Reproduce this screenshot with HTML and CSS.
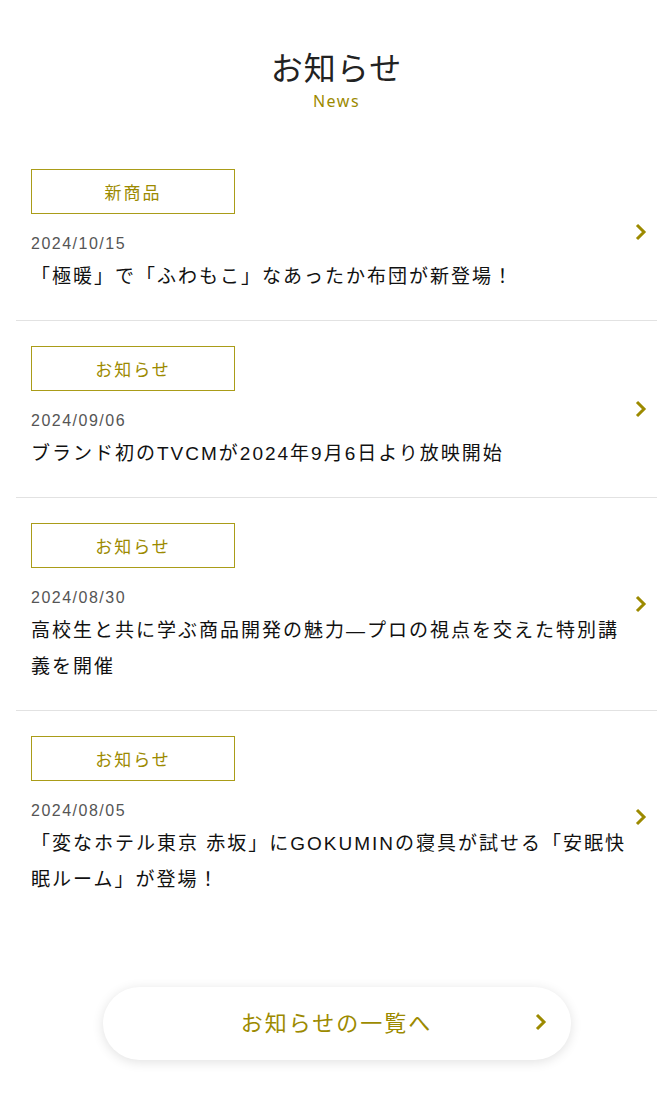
FILE: index.html
```html
<!DOCTYPE html>
<html lang="ja">
<head>
<meta charset="utf-8">
<link rel="stylesheet" href="styles.css">
</head>
<body>
<section class="news">
  <header class="news-head">
    <h2 class="news-title">お知らせ</h2>
    <p class="news-sub">News</p>
  </header>
  <ul class="news-list">
    <li class="news-item">
      <a class="news-link" href="#">
        <div class="news-body">
          <span class="tag">新商品</span>
          <time class="date">2024/10/15</time>
          <p class="headline">「極暖」で「ふわもこ」なあったか布団が新登場！</p>
        </div>
        <svg class="chev" viewBox="0 0 12 18" width="12" height="18"><path d="M2 2 L9 9 L2 16" fill="none" stroke="currentColor" stroke-width="3"/></svg>
      </a>
    </li>
    <li class="news-item">
      <a class="news-link" href="#">
        <div class="news-body">
          <span class="tag">お知らせ</span>
          <time class="date">2024/09/06</time>
          <p class="headline">ブランド初のTVCMが2024年9月6日より放映開始</p>
        </div>
        <svg class="chev" viewBox="0 0 12 18" width="12" height="18"><path d="M2 2 L9 9 L2 16" fill="none" stroke="currentColor" stroke-width="3"/></svg>
      </a>
    </li>
    <li class="news-item">
      <a class="news-link" href="#">
        <div class="news-body">
          <span class="tag">お知らせ</span>
          <time class="date">2024/08/30</time>
          <p class="headline">高校生と共に学ぶ商品開発の魅力―プロの視点を交えた特別講義を開催</p>
        </div>
        <svg class="chev" viewBox="0 0 12 18" width="12" height="18"><path d="M2 2 L9 9 L2 16" fill="none" stroke="currentColor" stroke-width="3"/></svg>
      </a>
    </li>
    <li class="news-item">
      <a class="news-link" href="#">
        <div class="news-body">
          <span class="tag">お知らせ</span>
          <time class="date">2024/08/05</time>
          <p class="headline">「変なホテル東京 赤坂」にGOKUMINの寝具が試せる「安眠快眠ルーム」が登場！</p>
        </div>
        <svg class="chev" viewBox="0 0 12 18" width="12" height="18"><path d="M2 2 L9 9 L2 16" fill="none" stroke="currentColor" stroke-width="3"/></svg>
      </a>
    </li>
  </ul>
  <div class="more-wrap">
    <a class="more-btn" href="#">
      <span class="more-text">お知らせの一覧へ</span>
      <svg class="more-chev" viewBox="0 0 12 18" width="12" height="18"><path d="M2 2 L9 9 L2 16" fill="none" stroke="currentColor" stroke-width="3"/></svg>
    </a>
  </div>
</section>
</body>
</html>
```
FILE: styles.css
```css
* { box-sizing: border-box; }
html, body { margin: 0; padding: 0; background: #fff; }
body {
  font-family: "Noto Sans CJK JP", "Noto Sans", sans-serif;
  color: #222;
}
.news { padding: 43px 14px 58px 16px; }
.news-head { text-align: center; }
.news-title {
  margin: 0;
  font-size: 32px;
  font-weight: 400;
  line-height: 46px;
  letter-spacing: 1px;
  color: #222;
}
.news-sub {
  margin: 2px 0 0;
  font-family: "Noto Sans", sans-serif;
  font-size: 16px;
  line-height: 20px;
  letter-spacing: 1.5px;
  color: #9c8a00;
}
.news-list { list-style: none; margin: 33px 0 0; padding: 0; }
.news-item { border-bottom: 1px solid #e2e2e2; }
.news-item:last-child { border-bottom: none; }
.news-link {
  display: flex;
  align-items: center;
  gap: 6px;
  padding: 25px 10px 25px 15px;
  text-decoration: none;
  color: inherit;
}
.news-body { flex: 1; min-width: 0; }
.tag {
  display: flex;
  align-items: center;
  justify-content: center;
  width: 204px;
  height: 45px;
  border: 1px solid #aa9c18;
  color: #9c8a00;
  font-size: 17px;
  letter-spacing: 2px;
}
.date {
  display: block;
  margin-top: 20px;
  font-family: "Liberation Sans", sans-serif;
  font-size: 16px;
  line-height: 20px;
  letter-spacing: 1.5px;
  color: #555;
}
.headline {
  margin: 5px 0 0;
  font-family: "Liberation Sans", "Noto Sans CJK JP", sans-serif;
  font-size: 19px;
  line-height: 36px;
  letter-spacing: 2px;
  color: #111;
}
.chev { color: #9c8a00; flex: none; }
.more-wrap { display: flex; justify-content: center; margin-top: 64px; }
.more-btn {
  position: relative;
  display: flex;
  align-items: center;
  justify-content: center;
  width: 468px;
  height: 73px;
  border-radius: 37px;
  background: #fff;
  box-shadow: 0 2px 12px rgba(0,0,0,0.12);
  text-decoration: none;
}
.more-text {
  font-size: 22px;
  line-height: 30px;
  letter-spacing: 2px;
  color: #9c8a00;
  margin-top: -5px;
}
.more-chev { position: absolute; right: 24px; top: 26px; color: #9c8a00; }
```
